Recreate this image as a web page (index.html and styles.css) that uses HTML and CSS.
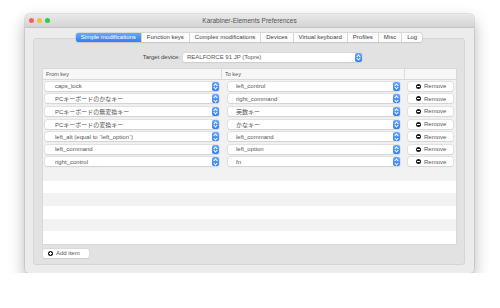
FILE: index.html
```html
<!DOCTYPE html>
<html lang="en">
<head>
<meta charset="utf-8"/>
<title>Karabiner-Elements Preferences</title>
<link rel="stylesheet" href="styles.css">
</head>
<body>
<div class="window">
  <div class="titlebar">
    <div class="lights"><span class="light red"></span><span class="light yellow"></span><span class="light green"></span></div>
    <div class="title">Karabiner-Elements Preferences</div>
  </div>
  <div class="content">
    <div class="tabs">
      <div class="tab active">Simple modifications</div>
      <div class="tab">Function keys</div>
      <div class="tab">Complex modifications</div>
      <div class="tab">Devices</div>
      <div class="tab">Virtual keyboard</div>
      <div class="tab">Profiles</div>
      <div class="tab">Misc</div>
      <div class="tab">Log</div>
    </div>
    <div class="panel">
      <div class="device-row">
        <span class="device-label">Target device:</span>
        <div class="popup device-popup"><span class="popup-text">REALFORCE 91 JP (Topre)</span><span class="stepper"></span></div>
      </div>
      <div class="table">
        <div class="thead">
          <div class="th">From key</div>
          <div class="th">To key</div>
          <div class="th"></div>
        </div>
        <div class="tbody">
          <div class="row">
            <div class="cell"><div class="popup from"><span class="popup-text">caps_lock</span><span class="stepper"></span></div></div>
            <div class="cell"><div class="popup to"><span class="popup-text">left_control</span><span class="stepper"></span></div></div>
            <div class="cell"><div class="btn"><span class="icon minus"></span>Remove</div></div>
          </div>
          <div class="row">
            <div class="cell"><div class="popup from"><span class="popup-text">PCキーボードのかなキー</span><span class="stepper"></span></div></div>
            <div class="cell"><div class="popup to"><span class="popup-text">right_command</span><span class="stepper"></span></div></div>
            <div class="cell"><div class="btn"><span class="icon minus"></span>Remove</div></div>
          </div>
          <div class="row">
            <div class="cell"><div class="popup from"><span class="popup-text">PCキーボードの無変換キー</span><span class="stepper"></span></div></div>
            <div class="cell"><div class="popup to"><span class="popup-text">英数キー</span><span class="stepper"></span></div></div>
            <div class="cell"><div class="btn"><span class="icon minus"></span>Remove</div></div>
          </div>
          <div class="row">
            <div class="cell"><div class="popup from"><span class="popup-text">PCキーボードの変換キー</span><span class="stepper"></span></div></div>
            <div class="cell"><div class="popup to"><span class="popup-text">かなキー</span><span class="stepper"></span></div></div>
            <div class="cell"><div class="btn"><span class="icon minus"></span>Remove</div></div>
          </div>
          <div class="row">
            <div class="cell"><div class="popup from"><span class="popup-text">left_alt (equal to `left_option`)</span><span class="stepper"></span></div></div>
            <div class="cell"><div class="popup to"><span class="popup-text">left_command</span><span class="stepper"></span></div></div>
            <div class="cell"><div class="btn"><span class="icon minus"></span>Remove</div></div>
          </div>
          <div class="row">
            <div class="cell"><div class="popup from"><span class="popup-text">left_command</span><span class="stepper"></span></div></div>
            <div class="cell"><div class="popup to"><span class="popup-text">left_option</span><span class="stepper"></span></div></div>
            <div class="cell"><div class="btn"><span class="icon minus"></span>Remove</div></div>
          </div>
          <div class="row">
            <div class="cell"><div class="popup from"><span class="popup-text">right_control</span><span class="stepper"></span></div></div>
            <div class="cell"><div class="popup to"><span class="popup-text">fn</span><span class="stepper"></span></div></div>
            <div class="cell"><div class="btn"><span class="icon minus"></span>Remove</div></div>
          </div>
          <div class="row empty"></div>
          <div class="row empty"></div>
          <div class="row empty"></div>
          <div class="row empty"></div>
          <div class="row empty"></div>
          <div class="row empty"></div>
        </div>
      </div>
      <div class="footer">
        <div class="btn add"><span class="icon plus"></span>Add item</div>
      </div>
    </div>
  </div>
</div>
</body>
</html>
```

FILE: styles.css
```css
body {
  margin: 0;
  background: #fff;
  font-family: "Liberation Sans", "Noto Sans CJK JP", sans-serif;
  font-size: 6px;
  color: #4a4a4a;
}
.window {
  margin: 14px 0 0 25px;
  width: 449px;
  height: 259px;
  background: #ececec;
  border-radius: 4px;
  box-shadow: 0 7px 16px rgba(0, 0, 0, 0.3), 0 0 0 0.5px rgba(0, 0, 0, 0.18);
  overflow: hidden;
  display: flex;
  flex-direction: column;
}
.titlebar {
  height: 13px;
  flex: none;
  background: linear-gradient(to bottom, #e9e9e9, #d4d4d4);
  border-bottom: 1px solid #c4c4c4;
  display: flex;
  align-items: center;
  position: relative;
}
.lights {
  display: flex;
  gap: 3px;
  padding-left: 4px;
}
.light {
  width: 5px;
  height: 5px;
  border-radius: 50%;
}
.red { background: #fc605c; }
.yellow { background: #fdbc40; }
.green { background: #34c84a; }
.title {
  position: absolute;
  left: 0;
  right: 0;
  text-align: center;
  font-size: 6.5px;
  color: #555;
}
.content {
  flex: 1;
  display: flex;
  flex-direction: column;
  padding: 5px 9px 8px 8px;
}
.tabs {
  align-self: center;
  display: flex;
  height: 9px;
  background: #fbfbfb;
  border-radius: 2px;
  box-shadow: 0 0 0 0.5px #c8c8c8, 0 0.5px 1px rgba(0,0,0,0.12);
  position: relative;
  z-index: 1;
  margin-bottom: -4px;
}
.tab {
  padding: 0 5px;
  line-height: 9px;
  color: #444;
  border-left: 0.5px solid #d6d6d6;
}
.tab:first-child { border-left: none; }
.tab.active {
  background: linear-gradient(to bottom, #6aa9f9, #2f7ef5);
  color: #fff;
  border-radius: 2px 0 0 2px;
}
.panel {
  flex: 1;
  background: #e2e2e2;
  border: 1px solid #d5d5d5;
  border-radius: 3px;
  padding: 13px 8px 0 9px;
  display: flex;
  flex-direction: column;
}
.device-row {
  display: flex;
  align-items: center;
  height: 10px;
  padding-left: 97px;
}
.device-label {
  width: 40px;
  text-align: right;
  margin-right: 3px;
  color: #444;
}
.popup {
  height: 9px;
  background: #fff;
  border-radius: 2px;
  box-shadow: 0 0 0 0.5px #d4d4d4, 0 0.5px 1px rgba(0,0,0,0.12);
  display: flex;
  align-items: center;
  justify-content: space-between;
}
.popup-text {
  padding-left: 4px;
  color: #555;
  white-space: nowrap;
}
.from .popup-text { padding-left: 10px; }
.to .popup-text { padding-left: 8px; }
.device-popup { width: 179px; }
.stepper {
  width: 7px;
  height: 9px;
  border-radius: 2px;
  background: linear-gradient(to bottom, #6aa9f9, #2f7ef5);
  position: relative;
}
.stepper::before, .stepper::after {
  content: "";
  position: absolute;
  left: 2px;
  width: 2px;
  height: 2px;
  border-left: 0.7px solid #fff;
  border-top: 0.7px solid #fff;
}
.stepper::before { top: 2px; transform: rotate(45deg); }
.stepper::after { top: 4.5px; transform: rotate(225deg); }
.table {
  margin-top: 7px;
  background: #fff;
  box-shadow: 0 0 0 0.5px #cdcdcd;
}
.thead {
  display: grid;
  grid-template-columns: 179px 183px 1fr;
  height: 10px;
  background: #f7f7f7;
  border-bottom: 0.5px solid #d8d8d8;
}
.th {
  line-height: 10px;
  padding-left: 3px;
  font-size: 5.5px;
  color: #555;
  border-right: 0.5px solid #dcdcdc;
}
.th:last-child { border-right: none; }
.row {
  display: grid;
  grid-template-columns: 179px 183px 1fr;
  height: 12.6px;
  align-items: center;
  background: #fff;
}
.row:nth-child(even) { background: #f2f2f2; }
.row:not(.empty) { background: #f1f1f1; }
.cell {
  display: flex;
  align-items: center;
}
.from { width: 174px; margin-left: 2px; }
.to { width: 172px; margin-left: 6px; }
.btn {
  height: 9px;
  background: #fff;
  border-radius: 2px;
  box-shadow: 0 0 0 0.5px #d4d4d4, 0 0.5px 1px rgba(0,0,0,0.1);
  display: flex;
  align-items: center;
  gap: 3px;
  padding: 0 7px 0 8px;
  color: #555;
  margin-left: 3px;
  white-space: nowrap;
}
.icon {
  width: 5px;
  height: 5px;
  border-radius: 50%;
  background: #1c1c1c;
  position: relative;
}
.icon::before {
  content: "";
  position: absolute;
  left: 1px;
  top: 2px;
  width: 3px;
  height: 1px;
  background: #fff;
}
.plus::after {
  content: "";
  position: absolute;
  left: 2px;
  top: 1px;
  width: 1px;
  height: 3px;
  background: #fff;
}
.footer {
  padding-top: 5px;
}
.btn.add {
  display: inline-flex;
  margin-left: 0;
  padding: 0 9px 0 5px;
}
```
